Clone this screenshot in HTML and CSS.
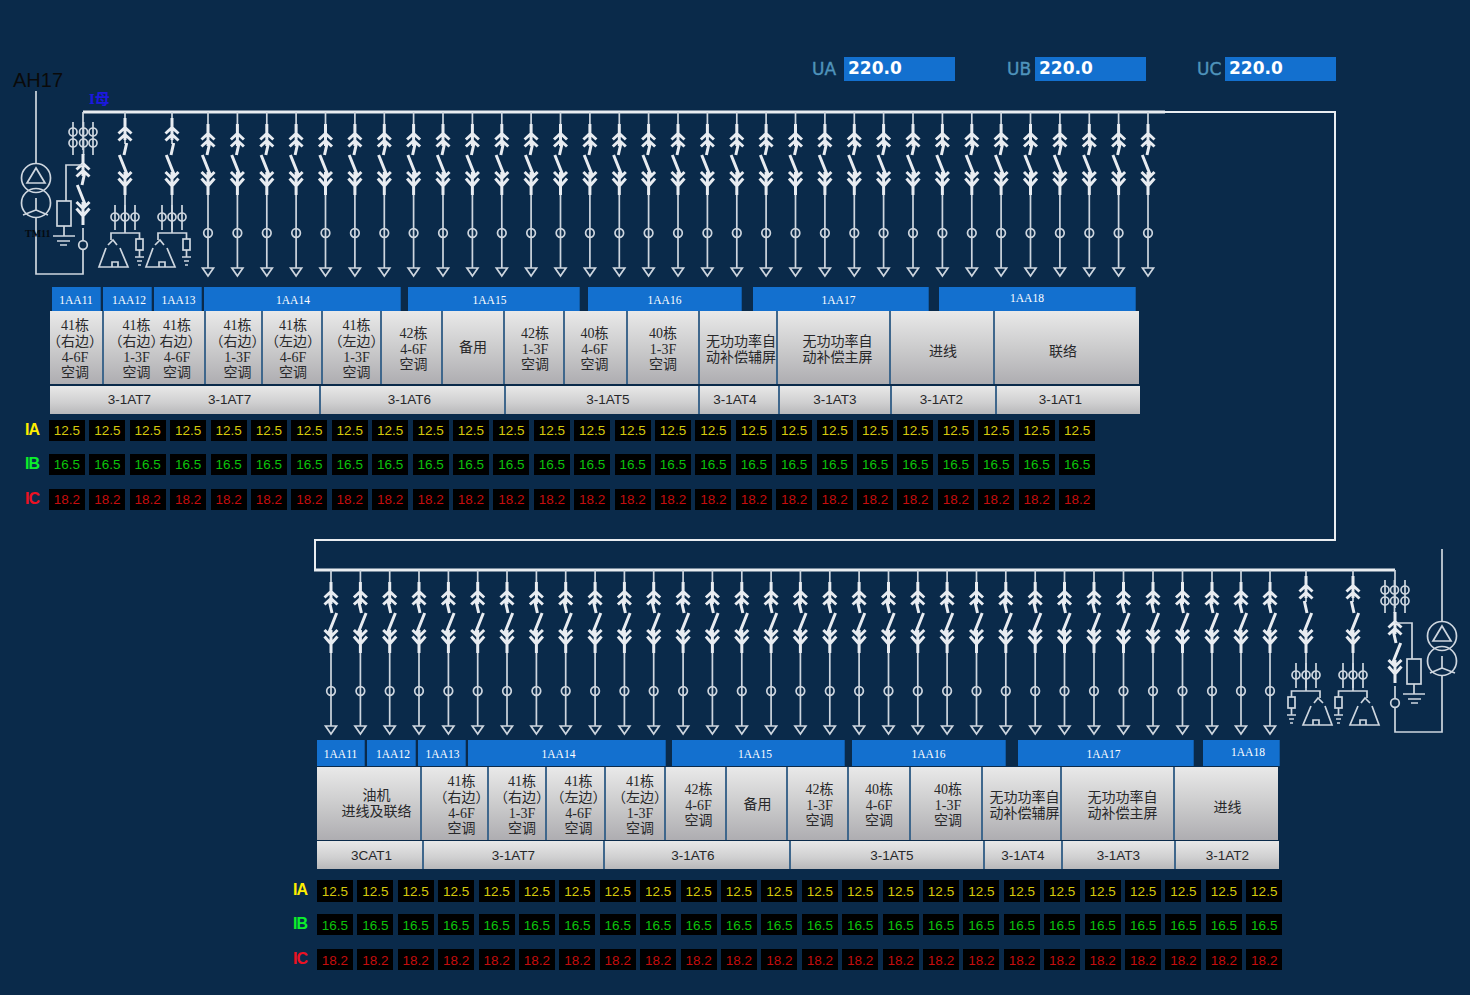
FILE: index.html
```html
<!DOCTYPE html>
<html>
<head>
    <meta charset="utf-8">
    <title>AH17</title>
    <link rel="stylesheet" href="styles.css">
</head>
<body>
<div class="page">

    <!-- single line diagram, free canvas behind the tables -->
    <svg class="wiring" viewBox="0 0 1470 995" width="1470" height="995">
        <defs>
            <path id="chevrons" class="thick" d="M0 12V34M-6.500 27.500L0 21.500L6.500 27.500M-6.500 34.500L0 28.500L6.500 34.500"/>
            <g id="breaker">
                <path class="thick" d="M0 60V83M1.700 31L-1 43M-5.700 43L2.300 63M-6.500 60L0 66.500L6.500 60M-6.500 66.500L0 74L6.500 66.500"/>
            </g>
            <g id="feeder">
                <path class="thin" d="M0 0V12M0 83V156"/>
                <use href="#chevrons"/>
                <use href="#breaker"/>
                <circle class="thin" cx="0" cy="121" r="4.3"/>
                <path class="thin" d="M-5.5 156H5.5L0 164Z"/>
            </g>
            <g id="comp">
                <path class="thin" d="M0 0V12M0 26V32M0 83V121"/>
                <use href="#chevrons" y="-6"/>
                <use href="#breaker"/>
                <path class="thin" d="M-10 93V118M0 93V118M10 93V118"/>
                <circle class="thin" cx="-10" cy="105" r="4"/>
                <circle class="thin" cx="0" cy="105" r="4"/>
                <circle class="thin" cx="10" cy="105" r="4"/>
                <path class="thin" d="M-14 128V121H14.5V127"/>
                <path class="thin" d="M-17 133L-12 128L-8 133M-19 136L-26 155H3L-5 136M-13 155V150H-7V155"/>
                <rect class="thin" x="11" y="127" width="7" height="11"/>
                <path class="thin" d="M14.5 138V145M10 145H19M12 149H17M13 153H16"/>
            </g>
            <g id="intake">
                <path class="thin" d="M36 91V163M36 218V274H83V249M83 241V228"/>
                <circle class="thin" cx="36" cy="178" r="14.5"/>
                <circle class="thin" cx="36" cy="203" r="14.5"/>
                <path class="thin" d="M36 168L27 183H45Z"/>
                <path class="thin" d="M36 198V210L23 215M36 210L48 215"/>
                <path class="thin" d="M83 112V150"/>
                <path class="thin" d="M73 122V155M83.500 122V155M93 122V155"/>
                <circle class="thin" cx="73" cy="132" r="4"/>
                <circle class="thin" cx="83.500" cy="132" r="4"/>
                <circle class="thin" cx="93" cy="132" r="4"/>
                <circle class="thin" cx="73" cy="143" r="4"/>
                <circle class="thin" cx="83.500" cy="143" r="4"/>
                <circle class="thin" cx="93" cy="143" r="4"/>
                <use href="#chevrons" x="83" y="142"/>
                <use href="#breaker" x="83" y="142"/>
                <circle class="thin" cx="83" cy="245" r="4.3"/>
                <path class="thin" d="M83 165H66V201"/>
                <rect class="thin" x="57" y="201" width="14" height="25"/>
                <path class="thin" d="M64 226V236M53 236H75M57 241H70M60 245H67"/>
                <use href="#comp" x="125" y="112"/>
                <use href="#comp" x="172" y="112"/>
            </g>
        </defs>

        <path class="bus" d="M83 112H1165"/>
        <path class="link" d="M1165 112H1335V540H315V570"/>
        <path class="bus" d="M314 570H1395"/>

        <use href="#intake"/>
        <use href="#intake" transform="translate(1478 458) scale(-1 1)"/>

        <g transform="translate(0 112)">
            <use href="#feeder" x="208"/><use href="#feeder" x="237.400"/><use href="#feeder" x="266.800"/><use href="#feeder" x="296.100"/>
            <use href="#feeder" x="325.500"/><use href="#feeder" x="354.900"/><use href="#feeder" x="384.300"/><use href="#feeder" x="413.600"/>
            <use href="#feeder" x="443"/><use href="#feeder" x="472.400"/><use href="#feeder" x="501.800"/><use href="#feeder" x="531.100"/>
            <use href="#feeder" x="560.500"/><use href="#feeder" x="589.900"/><use href="#feeder" x="619.300"/><use href="#feeder" x="648.600"/>
            <use href="#feeder" x="678"/><use href="#feeder" x="707.400"/><use href="#feeder" x="736.800"/><use href="#feeder" x="766.100"/>
            <use href="#feeder" x="795.500"/><use href="#feeder" x="824.900"/><use href="#feeder" x="854.300"/><use href="#feeder" x="883.600"/>
            <use href="#feeder" x="913"/><use href="#feeder" x="942.400"/><use href="#feeder" x="971.800"/><use href="#feeder" x="1001.100"/>
            <use href="#feeder" x="1030.500"/><use href="#feeder" x="1059.900"/><use href="#feeder" x="1089.300"/><use href="#feeder" x="1118.600"/>
            <use href="#feeder" x="1148"/>
        </g>

        <g transform="translate(0 570) scale(-1 1)">
            <use href="#feeder" x="-331"/><use href="#feeder" x="-360.400"/><use href="#feeder" x="-389.700"/><use href="#feeder" x="-419"/>
            <use href="#feeder" x="-448.400"/><use href="#feeder" x="-477.700"/><use href="#feeder" x="-507"/><use href="#feeder" x="-536.400"/>
            <use href="#feeder" x="-565.700"/><use href="#feeder" x="-595.100"/><use href="#feeder" x="-624.400"/><use href="#feeder" x="-653.700"/>
            <use href="#feeder" x="-683.100"/><use href="#feeder" x="-712.400"/><use href="#feeder" x="-741.800"/><use href="#feeder" x="-771.100"/>
            <use href="#feeder" x="-800.400"/><use href="#feeder" x="-829.800"/><use href="#feeder" x="-859.100"/><use href="#feeder" x="-888.500"/>
            <use href="#feeder" x="-917.800"/><use href="#feeder" x="-947.100"/><use href="#feeder" x="-976.500"/><use href="#feeder" x="-1005.800"/>
            <use href="#feeder" x="-1035.200"/><use href="#feeder" x="-1064.500"/><use href="#feeder" x="-1094"/><use href="#feeder" x="-1123.500"/>
            <use href="#feeder" x="-1153"/><use href="#feeder" x="-1182.500"/><use href="#feeder" x="-1212"/><use href="#feeder" x="-1241"/>
            <use href="#feeder" x="-1270"/>
        </g>

        <text class="station" x="13" y="87">AH17</text>
        <text class="busname" x="89" y="104">I母</text>
        <text class="trafo" x="25" y="237">TM11</text>
    </svg>

    <div class="volts">
        <span class="volt-name">UA</span><span class="volt-val">220.0</span>
        <span class="volt-name">UB</span><span class="volt-val">220.0</span>
        <span class="volt-name">UC</span><span class="volt-val">220.0</span>
    </div>

    <!-- bus section I -->
    <div class="board top">
        <div class="aa-row">
            <div class="aa">1AA11</div>
            <div class="aa">1AA12</div>
            <div class="aa">1AA13</div>
            <div class="aa gap7">1AA14</div>
            <div class="aa gap8">1AA15</div>
            <div class="aa gap11">1AA16</div>
            <div class="aa gap10">1AA17</div>
            <div class="aa raised">1AA18</div>
        </div>
        <div class="load-row">
            <div class="load"><div>41栋<br>（右边）<br>4-6F<br>空调</div></div>
            <div class="load pair"><div>41栋<br>（右边）<br>1-3F<br>空调</div><div>41栋<br>右边）<br>4-6F<br>空调</div></div>
            <div class="load"><div>41栋<br>（右边）<br>1-3F<br>空调</div></div>
            <div class="load"><div>41栋<br>（左边）<br>4-6F<br>空调</div></div>
            <div class="load"><div>41栋<br>（左边）<br>1-3F<br>空调</div></div>
            <div class="load"><div>42栋<br>4-6F<br>空调</div></div>
            <div class="load"><div>备用</div></div>
            <div class="load"><div>42栋<br>1-3F<br>空调</div></div>
            <div class="load"><div>40栋<br>4-6F<br>空调</div></div>
            <div class="load"><div>40栋<br>1-3F<br>空调</div></div>
            <div class="load"><div>无功功率自<br>动补偿辅屏</div></div>
            <div class="load"><div>无功功率自<br>动补偿主屏</div></div>
            <div class="load"><div>进线</div></div>
            <div class="load"><div>联络</div></div>
        </div>
        <div class="at-row">
            <div class="at at-pair"><span>3-1AT7</span><span>3-1AT7</span></div>
            <div class="at">3-1AT6</div>
            <div class="at">3-1AT5</div>
            <div class="at">3-1AT4</div>
            <div class="at">3-1AT3</div>
            <div class="at">3-1AT2</div>
            <div class="at">3-1AT1</div>
        </div>
        <div class="readings">
            <div class="reading ia">
                <span class="phase">IA</span>
                <span>12.5</span><span>12.5</span><span>12.5</span><span>12.5</span><span>12.5</span><span>12.5</span><span>12.5</span><span>12.5</span><span>12.5</span><span>12.5</span><span>12.5</span><span>12.5</span><span>12.5</span>
                <span>12.5</span><span>12.5</span><span>12.5</span><span>12.5</span><span>12.5</span><span>12.5</span><span>12.5</span><span>12.5</span><span>12.5</span><span>12.5</span><span>12.5</span><span>12.5</span><span>12.5</span>
            </div>
            <div class="reading ib">
                <span class="phase">IB</span>
                <span>16.5</span><span>16.5</span><span>16.5</span><span>16.5</span><span>16.5</span><span>16.5</span><span>16.5</span><span>16.5</span><span>16.5</span><span>16.5</span><span>16.5</span><span>16.5</span><span>16.5</span>
                <span>16.5</span><span>16.5</span><span>16.5</span><span>16.5</span><span>16.5</span><span>16.5</span><span>16.5</span><span>16.5</span><span>16.5</span><span>16.5</span><span>16.5</span><span>16.5</span><span>16.5</span>
            </div>
            <div class="reading ic">
                <span class="phase">IC</span>
                <span>18.2</span><span>18.2</span><span>18.2</span><span>18.2</span><span>18.2</span><span>18.2</span><span>18.2</span><span>18.2</span><span>18.2</span><span>18.2</span><span>18.2</span><span>18.2</span><span>18.2</span>
                <span>18.2</span><span>18.2</span><span>18.2</span><span>18.2</span><span>18.2</span><span>18.2</span><span>18.2</span><span>18.2</span><span>18.2</span><span>18.2</span><span>18.2</span><span>18.2</span><span>18.2</span>
            </div>
        </div>
    </div>

    <!-- bus section II -->
    <div class="board bottom">
        <div class="aa-row">
            <div class="aa">1AA11</div>
            <div class="aa">1AA12</div>
            <div class="aa">1AA13</div>
            <div class="aa gap6">1AA14</div>
            <div class="aa gap7">1AA15</div>
            <div class="aa gap12">1AA16</div>
            <div class="aa gap9">1AA17</div>
            <div class="aa raised">1AA18</div>
        </div>
        <div class="load-row">
            <div class="load"><div>油机<br>进线及联络</div></div>
            <div class="load"><div>41栋<br>（右边）<br>4-6F<br>空调</div></div>
            <div class="load"><div>41栋<br>（右边）<br>1-3F<br>空调</div></div>
            <div class="load"><div>41栋<br>（左边）<br>4-6F<br>空调</div></div>
            <div class="load"><div>41栋<br>（左边）<br>1-3F<br>空调</div></div>
            <div class="load"><div>42栋<br>4-6F<br>空调</div></div>
            <div class="load"><div>备用</div></div>
            <div class="load"><div>42栋<br>1-3F<br>空调</div></div>
            <div class="load"><div>40栋<br>4-6F<br>空调</div></div>
            <div class="load"><div>40栋<br>1-3F<br>空调</div></div>
            <div class="load"><div>无功功率自<br>动补偿辅屏</div></div>
            <div class="load"><div>无功功率自<br>动补偿主屏</div></div>
            <div class="load"><div>进线</div></div>
        </div>
        <div class="at-row">
            <div class="at">3CAT1</div>
            <div class="at">3-1AT7</div>
            <div class="at">3-1AT6</div>
            <div class="at">3-1AT5</div>
            <div class="at">3-1AT4</div>
            <div class="at">3-1AT3</div>
            <div class="at">3-1AT2</div>
        </div>
        <div class="readings">
            <div class="reading ia">
                <span class="phase">IA</span>
                <span>12.5</span><span>12.5</span><span>12.5</span><span>12.5</span><span>12.5</span><span>12.5</span><span>12.5</span><span>12.5</span><span>12.5</span><span>12.5</span><span>12.5</span><span>12.5</span>
                <span>12.5</span><span>12.5</span><span>12.5</span><span>12.5</span><span>12.5</span><span>12.5</span><span>12.5</span><span>12.5</span><span>12.5</span><span>12.5</span><span>12.5</span><span>12.5</span>
            </div>
            <div class="reading ib">
                <span class="phase">IB</span>
                <span>16.5</span><span>16.5</span><span>16.5</span><span>16.5</span><span>16.5</span><span>16.5</span><span>16.5</span><span>16.5</span><span>16.5</span><span>16.5</span><span>16.5</span><span>16.5</span>
                <span>16.5</span><span>16.5</span><span>16.5</span><span>16.5</span><span>16.5</span><span>16.5</span><span>16.5</span><span>16.5</span><span>16.5</span><span>16.5</span><span>16.5</span><span>16.5</span>
            </div>
            <div class="reading ic">
                <span class="phase">IC</span>
                <span>18.2</span><span>18.2</span><span>18.2</span><span>18.2</span><span>18.2</span><span>18.2</span><span>18.2</span><span>18.2</span><span>18.2</span><span>18.2</span><span>18.2</span><span>18.2</span>
                <span>18.2</span><span>18.2</span><span>18.2</span><span>18.2</span><span>18.2</span><span>18.2</span><span>18.2</span><span>18.2</span><span>18.2</span><span>18.2</span><span>18.2</span><span>18.2</span>
            </div>
        </div>
    </div>

</div>
</body>
</html>
```

FILE: styles.css
```css
* {
    margin: 0;
    padding: 0;
    box-sizing: border-box;
}

html, body {
    height: 995px;
    overflow: hidden;
}

body {
    background-color: #0a2a4a;
    font-family: "Liberation Sans", sans-serif;
}

.page {
    position: relative;
    width: 1470px;
    height: 995px;
    padding-top: 57px;
}

/* diagram */
.wiring {
    position: absolute;
    top: 0;
    left: 0;
}

.thin {
    fill: none;
    stroke: #ced6df;
    stroke-width: 1.7;
}

.thick {
    fill: none;
    stroke: #e8ecf1;
    stroke-width: 3;
}

.bus {
    fill: none;
    stroke: #e9edf1;
    stroke-width: 3;
}

.link {
    fill: none;
    stroke: #e9edf1;
    stroke-width: 2;
}

.station {
    font-family: "Liberation Sans", sans-serif;
    font-size: 20px;
    fill: #0a0a0a;
}

.busname {
    font-family: "Liberation Serif", "Noto Sans CJK SC", serif;
    font-size: 15px;
    font-weight: bold;
    fill: #1c18e0;
}

.trafo {
    font-family: "Liberation Serif", serif;
    font-size: 10px;
    font-weight: bold;
    fill: #05090e;
}

/* voltages */
.volts {
    position: relative;
    display: flex;
    height: 24px;
    padding-left: 812px;
    align-items: center;
}

.volt-name {
    width: 28px;
    font-family: "DejaVu Sans", sans-serif;
    font-size: 17px;
    -webkit-text-stroke: 0.4px #4f94bc;
    color: #4f94bc;
}

.volt-name:first-child {
    width: 32px;
}

.volt-name:nth-of-type(3) {
    margin-left: 52px;
}

.volt-name:nth-of-type(5) {
    margin-left: 51px;
}

.volt-val {
    width: 111px;
    height: 24px;
    padding-left: 4px;
    background-color: #1370cf;
    font-family: "DejaVu Sans", sans-serif;
    font-size: 17px;
    font-weight: bold;
    line-height: 23px;
    color: #fff;
}

/* boards */
.board {
    position: relative;
    color: #28282a;
}

.top {
    margin: 206px 0 0 50px;
}

.bottom {
    margin: 230px 0 0 317px;
}

.aa-row {
    display: grid;
    margin-left: 2px;
    height: 24px;
    grid-template-columns: 51px 51px 50px 204px 180px 165px 186px 197px;
}

.bottom .aa-row {
    margin-left: 0;
    height: 26px;
    margin-bottom: 1px;
    grid-template-columns: 50px 51px 50px 204px 180px 166px 185px 77px;
}

.aa {
    margin-right: 2px;
    padding-top: 1px;
    background-color: #1370cf;
    border-right: 1px solid #0f5ba8;
    font-family: "Liberation Serif", serif;
    font-size: 11.5px;
    color: #fff;
    display: flex;
    align-items: center;
    justify-content: center;
}

.aa.raised {
    margin-right: 0;
    padding: 0 20px 3px 0;
}

.gap6 { margin-right: 6px; }
.gap7 { margin-right: 7px; }
.gap8 { margin-right: 8px; }
.gap9 { margin-right: 9px; }
.gap10 { margin-right: 10px; }
.gap11 { margin-right: 11px; }
.gap12 { margin-right: 12px; }

/* labels sit off-centre on some of the bars */
.aa:nth-child(2) { padding-left: 4px; }
.aa:nth-child(3) { padding-left: 2px; }
.top .aa:nth-child(4) { padding-right: 18px; }
.top .aa:nth-child(5) { padding-right: 8px; }
.top .aa:nth-child(7) { padding-right: 4px; }

.bottom .aa { padding-top: 2px; }
.bottom .aa:nth-child(4) { padding-right: 16px; }
.bottom .aa:nth-child(5) { padding-right: 6px; }
.bottom .aa:nth-child(7) { padding-right: 4px; }
.bottom .aa.raised { padding: 0 0 2px 14px; }

/* the tracks include the blue-grey seam on the right of each cell */
.load-row {
    display: grid;
    height: 73px;
    grid-template-columns: 54px 102px 57px 60px 59px 61px 62px 60px 63px 72px 78px 113px 104px 144px;
}

.bottom .load-row {
    grid-template-columns: 105px 67px 58px 59px 60px 61px 61px 61px 62px 72px 79px 113px 103px;
}

.load {
    display: flex;
    align-items: center;
    justify-content: center;
    padding-top: 4px;
    background: linear-gradient(#e9e9e9, #c9c9ca 55%, #aeadb1);
    border-right: 2px solid #3f678c;
    font-family: "Liberation Serif", "Noto Sans CJK SC", serif;
    font-size: 14px;
    font-feature-settings: "halt";
    line-height: 15.6px;
    text-align: center;
    white-space: nowrap;
}

.load:last-child,
.at:last-child {
    border-right: 0;
}

.load.pair {
    gap: 2px;
    padding-left: 2px;
}

/* panel text is not quite centred, same as the wiring drawing */
.top .load:nth-child(1) { padding-right: 2px; }
.top .load:nth-child(3) { padding-left: 8px; }
.top .load:nth-child(4) { padding-left: 2px; }
.top .load:nth-child(5) { padding-left: 10px; }
.top .load:nth-child(6) { padding-left: 4px; }
.top .load:nth-child(8) { padding-left: 2px; }
.top .load:nth-child(9) { padding-right: 2px; }
.top .load:nth-child(11) { padding-left: 6px; }
.top .load:nth-child(12) { padding-left: 8px; }
.top .load:nth-child(13) { padding-left: 2px; padding-top: 8px; }
.top .load:nth-child(14) { padding-right: 8px; padding-top: 8px; }
.top .load:nth-child(7) { padding-top: 0; }

.bottom .load:nth-child(1) { padding-left: 16px; padding-top: 0; }
.bottom .load:nth-child(2) { padding-left: 14px; }
.bottom .load:nth-child(3) { padding-left: 10px; }
.bottom .load:nth-child(4) { padding-left: 6px; }
.bottom .load:nth-child(5) { padding-left: 10px; }
.bottom .load:nth-child(6) { padding-left: 6px; }
.bottom .load:nth-child(7) { padding-left: 2px; padding-top: 2px; }
.bottom .load:nth-child(8) { padding-left: 4px; }
.bottom .load:nth-child(10) { padding-left: 4px; }
.bottom .load:nth-child(11) { padding-left: 6px; }
.bottom .load:nth-child(12) { padding-left: 10px; }
.bottom .load:nth-child(13) { padding-left: 2px; padding-top: 8px; }

.at-row {
    display: grid;
    margin-top: 2px;
    height: 28px;
    grid-template-columns: 271px 185px 194px 80px 112px 105px 143px;
}

.bottom .at-row {
    margin-top: 1px;
    grid-template-columns: 107px 181px 186px 194px 78px 113px 103px;
}

.at {
    display: flex;
    align-items: center;
    justify-content: center;
    padding-bottom: 2px;
    background: linear-gradient(#e8e8e8, #cfcfd0 60%, #b8b8ba);
    border-right: 2px solid #3f678c;
    font-size: 13.5px;
}

.bottom .at {
    padding-bottom: 0;
}

.at-pair {
    gap: 57px;
    padding-right: 10px;
}

.top .at:nth-child(2) { padding-right: 6px; }
.top .at:nth-child(3) { padding-left: 12px; }
.top .at:nth-child(4) { padding-right: 8px; }
.top .at:nth-child(6) { padding-right: 4px; }
.top .at:nth-child(7) { padding-right: 16px; }
.bottom .at:nth-child(1) { padding-left: 4px; }
.bottom .at:nth-child(3) { padding-right: 8px; }
.bottom .at:nth-child(4) { padding-left: 10px; }

/* current readings */
.readings {
    margin-top: 6px;
}

.bottom .readings {
    margin-top: 11px;
}

.reading {
    display: flex;
    align-items: center;
    gap: 4.42px;
    height: 21px;
    margin: 0 0 13px -26px;
    font-size: 13.5px;
}

.reading.ib {
    margin-bottom: 14px;
}

.bottom .reading {
    margin-left: -25px;
}

.bottom .reading.ia {
    height: 22px;
    margin-bottom: 12px;
}

.reading span {
    width: 36px;
    height: 100%;
    line-height: 22px;
    background-color: #000;
    text-align: center;
}

.bottom .reading span {
    line-height: 23px;
}

.reading .phase {
    width: 20.500px;
    height: 17px;
    margin-bottom: 3px;
    padding-left: 1px;
    background: none;
    font-size: 16px;
    font-weight: bold;
    letter-spacing: -1px;
    line-height: 17px;
    text-align: left;
}

.bottom .reading .phase {
    line-height: 17px;
}

.ia { color: #d6c80c; }
.ib { color: #0cc20c; }
.ic { color: #c60d0d; }

.ia .phase { color: #ffee00; }
.ib .phase { color: #0cf02c; }
.ic .phase { color: #ee1122; }
```
